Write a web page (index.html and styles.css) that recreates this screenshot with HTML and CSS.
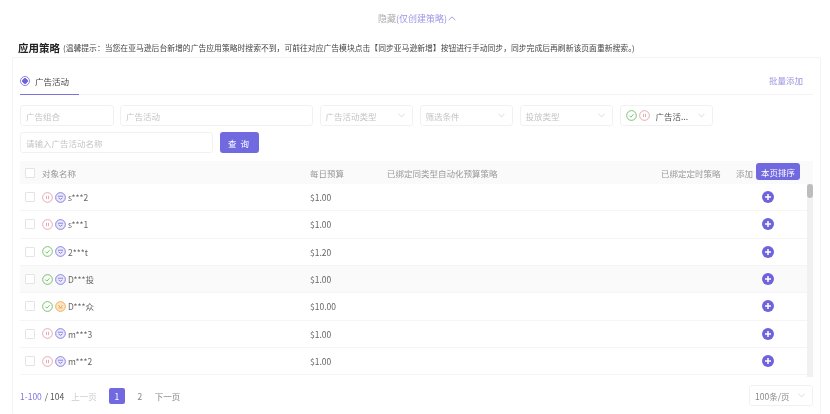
FILE: index.html
```html
<!DOCTYPE html>
<html lang="en">
<head>
  <meta charset="UTF-8"/>
  <title>应用策略</title>
  <link rel="stylesheet" href="styles.css">
</head>
<body>
  <svg class="sprite" width="0" height="0">
    <symbol id="i-on" viewBox="0 0 12 12">
      <circle cx="6" cy="6" r="5.3" fill="none" stroke="#6cbd63" stroke-width="1"/>
      <path d="M3.6 6.1l1.7 1.7 3-3.2" fill="none" stroke="#6cbd63" stroke-width="1"/>
    </symbol>
    <symbol id="i-pause" viewBox="0 0 12 12">
      <circle cx="6" cy="6" r="5.3" fill="none" stroke="#e3a3ad" stroke-width="1"/>
      <path d="M4.9 4.2v3.6M7.1 4.2v3.6" fill="none" stroke="#e3a3ad" stroke-width="1"/>
    </symbol>
    <symbol id="i-sp" viewBox="0 0 12 12">
      <circle cx="6" cy="6" r="5.3" fill="#ecebfb" stroke="#7f77dc" stroke-width="1"/>
      <path d="M3.2 4.6h5.6M3.8 6.4l2.2 1.6 2.2-1.6" fill="none" stroke="#7f77dc" stroke-width="1"/>
    </symbol>
    <symbol id="i-sb" viewBox="0 0 12 12">
      <circle cx="6" cy="6" r="5.3" fill="#fbe6c8" stroke="#eda94f" stroke-width="1"/>
      <path d="M3.8 4.4l2.2 3 2.2-3M3.8 7.6h4.4" fill="none" stroke="#eda94f" stroke-width="1"/>
    </symbol>
    <symbol id="i-add" viewBox="0 0 12 12">
      <circle cx="6" cy="6" r="6" fill="#6f63dc"/>
      <path d="M6 3v6M3 6h6" fill="none" stroke="#fff" stroke-width="1.5"/>
    </symbol>
    <symbol id="i-down" viewBox="0 0 10 6">
      <path d="M.8.8L5 5l4.2-4.2" fill="none" stroke="#c9c9c9" stroke-width="1"/>
    </symbol>
  </svg>

  <div class="toggle">
    <span class="toggle-gray">隐藏</span>
    <span class="toggle-link">(仅创建策略)</span>
    <svg class="toggle-arrow" viewBox="0 0 10 6"><path d="M.8 5L5 1l4.2 4" fill="none" stroke="#7f77dc" stroke-width=".9"/></svg>
  </div>

  <div class="title-row">
    <span class="title">应用策略</span>
    <span class="hint">(温馨提示：当您在亚马逊后台新增的广告应用策略时搜索不到，可前往对应广告模块点击【同步亚马逊新增】按钮进行手动同步，同步完成后再刷新该页面重新搜索。)</span>
  </div>

  <div class="card">
    <div class="tabs">
      <div class="tab"><span class="radio"></span>广告活动</div>
      <a class="batch">批量添加</a>
    </div>

    <div class="filters">
      <div class="field w-s">广告组合</div>
      <div class="field w-l">广告活动</div>
      <div class="field w-s select">广告活动类型<svg class="down"><use href="#i-down"/></svg></div>
      <div class="field w-s select">筛选条件<svg class="down"><use href="#i-down"/></svg></div>
      <div class="field w-s select">投放类型<svg class="down"><use href="#i-down"/></svg></div>
      <div class="field w-s select status">
        <svg class="icon"><use href="#i-on"/></svg>
        <svg class="icon"><use href="#i-pause"/></svg>
        <span class="status-text">广告活...</span>
        <svg class="down"><use href="#i-down"/></svg>
      </div>
    </div>
    <div class="filters second">
      <div class="field w-l">请输入广告活动名称</div>
      <button class="search">查 询</button>
    </div>

    <div class="table">
      <div class="row head">
        <span class="check"></span>
        <span class="c-name">对象名称</span>
        <span class="c-budget">每日预算</span>
        <span class="c-auto">已绑定同类型自动化预算策略</span>
        <span class="c-time">已绑定定时策略</span>
        <span class="c-add">添加</span>
        <button class="sort">本页排序</button>
      </div>
      <div class="body">
        <div class="rows">
          <div class="row">
            <span class="check"></span>
            <span class="c-name"><svg class="icon"><use href="#i-pause"/></svg><svg class="icon"><use href="#i-sp"/></svg>s***2</span>
            <span class="c-budget">$1.00</span>
            <svg class="plus"><use href="#i-add"/></svg>
          </div>
          <div class="row">
            <span class="check"></span>
            <span class="c-name"><svg class="icon"><use href="#i-pause"/></svg><svg class="icon"><use href="#i-sp"/></svg>s***1</span>
            <span class="c-budget">$1.00</span>
            <svg class="plus"><use href="#i-add"/></svg>
          </div>
          <div class="row">
            <span class="check"></span>
            <span class="c-name"><svg class="icon"><use href="#i-on"/></svg><svg class="icon"><use href="#i-sp"/></svg>2***t</span>
            <span class="c-budget">$1.20</span>
            <svg class="plus"><use href="#i-add"/></svg>
          </div>
          <div class="row hover">
            <span class="check"></span>
            <span class="c-name"><svg class="icon"><use href="#i-on"/></svg><svg class="icon"><use href="#i-sp"/></svg>D***投</span>
            <span class="c-budget">$1.00</span>
            <svg class="plus"><use href="#i-add"/></svg>
          </div>
          <div class="row">
            <span class="check"></span>
            <span class="c-name"><svg class="icon"><use href="#i-on"/></svg><svg class="icon"><use href="#i-sb"/></svg>D***众</span>
            <span class="c-budget">$10.00</span>
            <svg class="plus"><use href="#i-add"/></svg>
          </div>
          <div class="row">
            <span class="check"></span>
            <span class="c-name"><svg class="icon"><use href="#i-pause"/></svg><svg class="icon"><use href="#i-sp"/></svg>m***3</span>
            <span class="c-budget">$1.00</span>
            <svg class="plus"><use href="#i-add"/></svg>
          </div>
          <div class="row">
            <span class="check"></span>
            <span class="c-name"><svg class="icon"><use href="#i-pause"/></svg><svg class="icon"><use href="#i-sp"/></svg>m***2</span>
            <span class="c-budget">$1.00</span>
            <svg class="plus"><use href="#i-add"/></svg>
          </div>
        </div>
        <div class="scrollbar"><div class="thumb"></div></div>
      </div>
    </div>

    <div class="pager">
      <span class="range">1-100</span>
      <span class="total">/ 104</span>
      <span class="prev">上一页</span>
      <span class="page current">1</span>
      <span class="page">2</span>
      <span class="next">下一页</span>
      <div class="field size select">100条/页<svg class="down"><use href="#i-down"/></svg></div>
    </div>
  </div>
</body>
</html>
```

FILE: styles.css
```css
* {
  box-sizing: border-box;
}
html, body {
  height: 100%;
  overflow: hidden;
}
body {
  margin: 0;
  background: #fff;
  color: #555;
  font-family: "Noto Sans CJK SC", "Noto Sans", sans-serif;
  font-size: 8.5px;
  filter: blur(0.35px);
}
.sprite {
  position: absolute;
}
.toggle {
  height: 13px;
  margin-top: 12px;
  display: flex;
  justify-content: center;
  align-items: center;
  font-size: 9px;
  padding-left: 4px;
}
.toggle-gray {
  color: #aaa;
}
.toggle-link {
  color: #9c95e4;
}
.toggle-arrow {
  width: 8px;
  height: 5px;
  margin-left: 1px;
}
.title-row {
  height: 16px;
  margin-top: 14px;
  padding-left: 18px;
  display: flex;
  align-items: center;
}
.title {
  font-size: 10.5px;
  font-weight: 700;
  color: #222;
  margin-right: 3px;
}
.hint {
  font-size: 7.82px;
  color: #444;
  white-space: nowrap;
}
.card {
  width: 809px;
  height: 357px;
  margin: 2px 0 0 12px;
  padding: 0 7px;
  border: 1px solid #f4f4f4;
  border-bottom: none;
  border-radius: 2px;
}
.tabs {
  height: 37px;
  display: flex;
  justify-content: space-between;
  align-items: flex-end;
  border-bottom: 1px solid #f3f3f3;
}
.tab {
  width: 59px;
  height: 28px;
  display: flex;
  align-items: center;
  gap: 5px;
  color: #444;
  border-bottom: 1px solid #7b72e0;
  margin-bottom: -1px;
}
.radio {
  width: 10px;
  height: 10px;
  border-radius: 50%;
  border: 1px solid #8c84e4;
  background: radial-gradient(circle, #6f63dc 2.5px, #fff 3px);
}
.batch {
  color: #9c95e4;
  height: 28px;
  line-height: 28px;
  margin-right: 10px;
}
.filters {
  display: flex;
  gap: 6.5px;
  margin-top: 10px;
}
.filters.second {
  margin-top: 6px;
}
.field {
  height: 21px;
  padding: 0 5px;
  display: flex;
  align-items: center;
  border: 1px solid #f1f1f1;
  border-radius: 3px;
  color: #c4c4c4;
  white-space: nowrap;
}
.w-s {
  width: 93.5px;
}
.w-l {
  width: 193px;
}
.select {
  justify-content: space-between;
}
.down {
  width: 7px;
  height: 5px;
  margin-right: 2px;
  flex: none;
}
.status {
  justify-content: flex-start;
  gap: 2px;
}
.status-text {
  color: #555;
  margin: 0 auto 0 4px;
}
.icon {
  width: 11px;
  height: 11px;
  flex: none;
}
.search {
  width: 39px;
  height: 21px;
  padding: 0;
  border: none;
  border-radius: 3px;
  background: #7169e0;
  color: #fff;
  font: inherit;
  letter-spacing: 1px;
}
.table {
  margin-top: 8px;
  width: 793px;
}
.row {
  height: 27.33px;
  display: flex;
  align-items: center;
  border-bottom: 1px solid #f5f5f5;
  color: #666;
}
.row.head {
  height: 23px;
  background: #fafafa;
  color: #999;
  border-bottom: none;
}
.row.hover {
  background: #fafafa;
}
.check {
  width: 10px;
  height: 10px;
  margin-left: 5px;
  flex: none;
  border: 1px solid #e4e4e4;
  border-radius: 1px;
  background: #fff;
}
.c-name {
  width: 275px;
  margin-left: 7px;
  display: flex;
  align-items: center;
  gap: 2px;
}
.c-budget {
  width: 77px;
  margin-left: -7px;
}
.c-auto {
  width: 274px;
}
.c-time {
  width: 75px;
}
.c-add {
  width: 20px;
}
.sort {
  width: 44px;
  height: 17px;
  margin-bottom: 2px;
  padding: 0;
  border: none;
  border-radius: 3px;
  background: #7169e0;
  color: #fff;
  font: inherit;
}
.body {
  display: flex;
  height: 193px;
  overflow: hidden;
}
.rows {
  flex: 1;
}
.plus {
  width: 12px;
  height: 12px;
  margin-left: 375px;
}
.scrollbar {
  width: 6px;
  background: #f1f1f1;
}
.thumb {
  width: 6px;
  height: 14px;
  border-radius: 3px;
  background: #bdbdbd;
}
.pager {
  width: 793px;
  margin-top: 8px;
  display: flex;
  align-items: center;
  height: 21px;
}
.range {
  color: #7f77dc;
}
.total {
  color: #555;
  margin-left: 3px;
}
.prev {
  color: #ccc;
  margin-left: 7px;
}
.next {
  color: #888;
  margin-left: 7px;
}
.page {
  width: 16px;
  height: 16px;
  margin-left: 7px;
  display: flex;
  justify-content: center;
  align-items: center;
  color: #888;
  border-radius: 2px;
}
.page.current {
  margin-left: 12px;
  background: #7169e0;
  color: #fff;
}
.size {
  width: 64px;
  margin-left: auto;
  color: #888;
}
```
